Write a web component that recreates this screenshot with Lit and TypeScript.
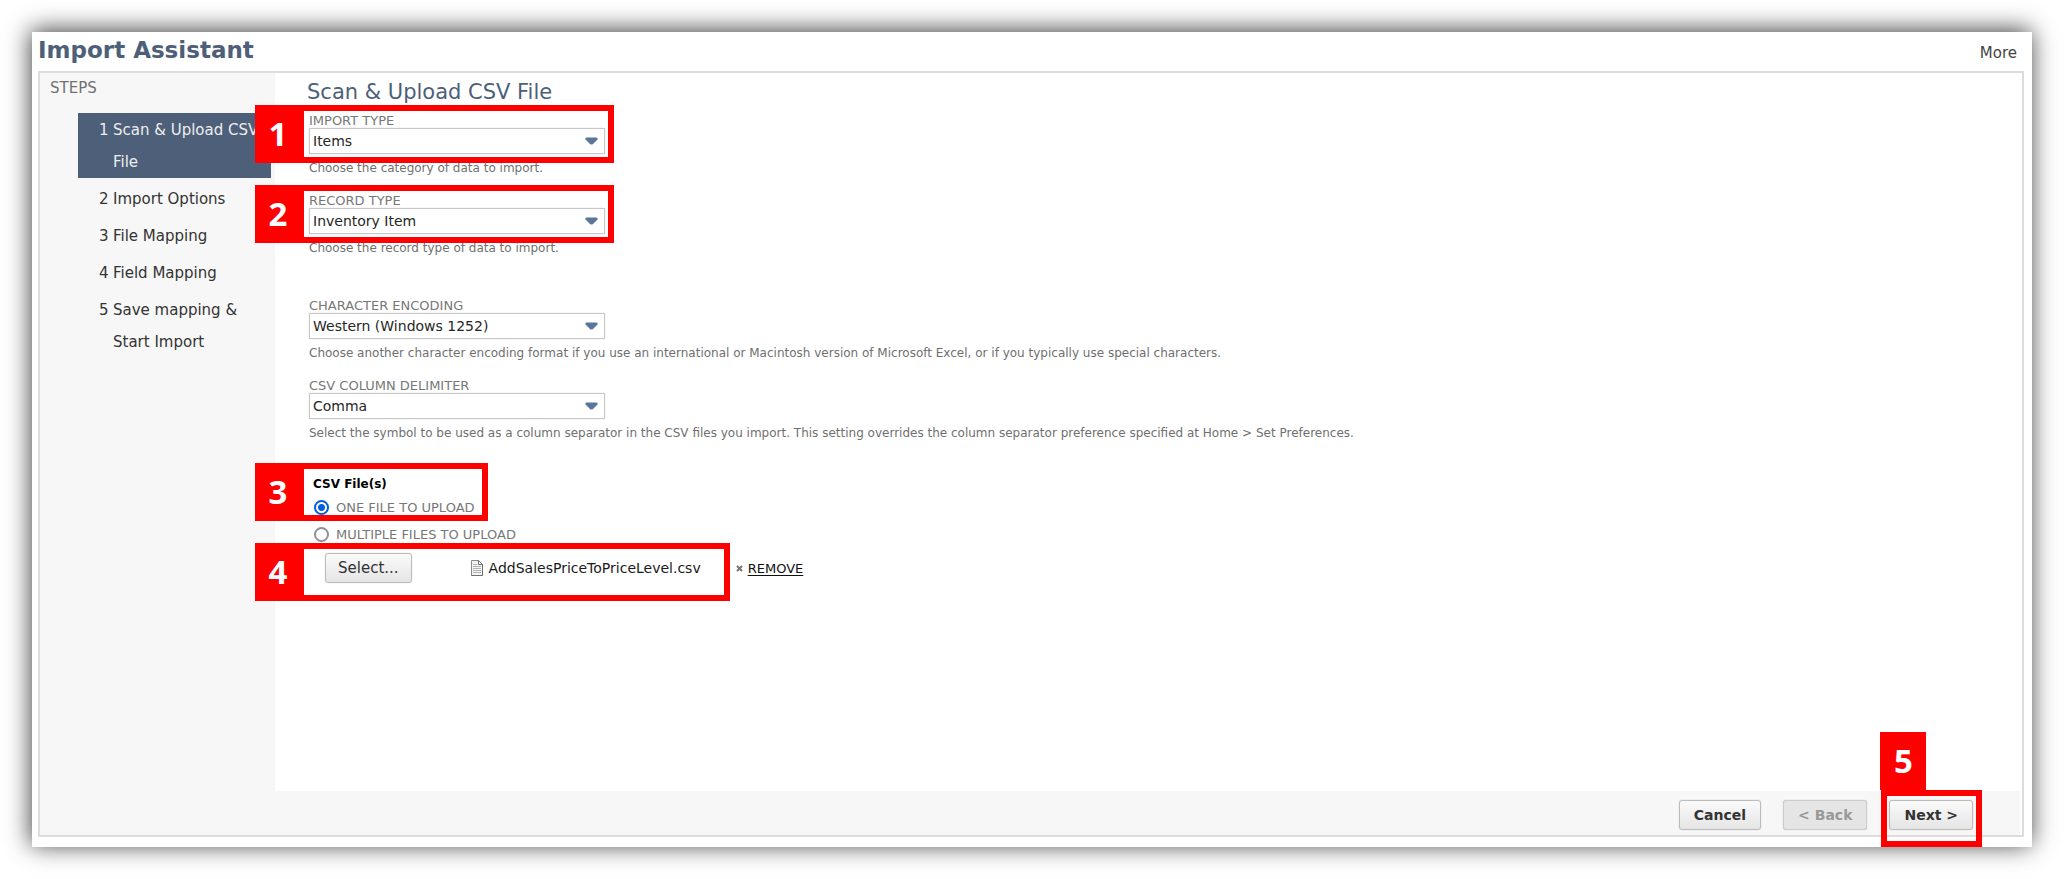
import { LitElement, html, css, svg, nothing } from 'lit';
import { customElement, property, state } from 'lit/decorators.js';
import { classMap } from 'lit/directives/class-map.js';

interface Step {
  label: string;
}

interface FieldDef {
  id: string;
  label: string;
  help: string;
  value: string;
  options: string[];
  callout?: number;
}

const STEPS: Step[] = [
  { label: 'Scan & Upload CSV File' },
  { label: 'Import Options' },
  { label: 'File Mapping' },
  { label: 'Field Mapping' },
  { label: 'Save mapping & Start Import' },
];

const TYPE_FIELDS: FieldDef[] = [
  {
    id: 'import-type',
    label: 'IMPORT TYPE',
    help: 'Choose the category of data to import.',
    value: 'Items',
    options: ['Items'],
    callout: 1,
  },
  {
    id: 'record-type',
    label: 'RECORD TYPE',
    help: 'Choose the record type of data to import.',
    value: 'Inventory Item',
    options: ['Inventory Item'],
    callout: 2,
  },
];

const FORMAT_FIELDS: FieldDef[] = [
  {
    id: 'encoding',
    label: 'CHARACTER ENCODING',
    help: 'Choose another character encoding format if you use an international or Macintosh version of Microsoft Excel, or if you typically use special characters.',
    value: 'Western (Windows 1252)',
    options: ['Western (Windows 1252)'],
  },
  {
    id: 'delimiter',
    label: 'CSV COLUMN DELIMITER',
    help: 'Select the symbol to be used as a column separator in the CSV files you import. This setting overrides the column separator preference specified at Home > Set Preferences.',
    value: 'Comma',
    options: ['Comma'],
  },
];

/* Red numbered marker: fills the box given by its host and frames what lies inside. */
@customElement('step-callout')
export class StepCallout extends LitElement {
  @property({ type: Number }) number = 1;
  @property({ type: Boolean, reflect: true }) above = false;

  static styles = css`
    :host {
      position: absolute;
      z-index: 2;
      display: flex;
      pointer-events: none;
    }
    .badge {
      display: flex;
      align-items: center;
      justify-content: center;
      flex: none;
      box-sizing: border-box;
      width: 49px;
      padding-right: 3px;
      background: #ff0000;
      color: #ffffff;
      font: 700 33px/44px 'Open Sans', 'Noto Sans', sans-serif;
    }
    .frame {
      flex: 1;
      border: 6px solid #ff0000;
      border-left-width: 0;
    }
    :host([above]) .badge {
      position: absolute;
      bottom: 100%;
      left: -1px;
      width: 46px;
      height: 58px;
      padding-right: 0;
    }
    :host([above]) .frame {
      border-left-width: 6px;
    }
  `;

  render() {
    return html`<span class="badge">${this.number}</span><span class="frame"></span>`;
  }
}

@customElement('select-field')
export class SelectField extends LitElement {
  @property({ attribute: false }) field!: FieldDef;

  static styles = css`
    :host {
      display: block;
    }
    .control {
      position: relative;
      width: 296px;
    }
    label {
      display: block;
      color: #777777;
      font-size: 13px;
      line-height: 15px;
    }
    .box {
      display: grid;
      align-items: center;
    }
    select,
    .arrow {
      grid-area: 1 / 1;
    }
    select {
      appearance: none;
      box-sizing: border-box;
      width: 100%;
      height: 26px;
      margin: 0;
      padding: 0 28px 0 3px;
      border: 1px solid #c8c8c8;
      border-radius: 0;
      box-shadow: 0 0 1px #cccccc;
      background: #ffffff;
      color: #262626;
      font: inherit;
      font-size: 14px;
    }
    .arrow {
      justify-self: end;
      margin-right: 7px;
      pointer-events: none;
    }
    .help {
      margin: 4px 0 0;
      color: #6f6f6f;
      font-size: 12px;
      line-height: 20px;
    }
    step-callout {
      inset: -8px -9px -9px -54px;
    }
  `;

  render() {
    const f = this.field;
    return html`
      <div class="control">
        <label for=${f.id}>${f.label}</label>
        <div class="box">
          <select id=${f.id}>
            ${f.options.map((o) => html`<option ?selected=${o === f.value}>${o}</option>`)}
          </select>
          <svg class="arrow" width="13" height="8" viewBox="0 0 13 8" aria-hidden="true">
            <path d="M1.500 0.500h10q1 0 1 1v1L8 7q-1.500 1-3 0L0.500 2.500v-1q0-1 1-1z" fill="#5a779b" />
          </svg>
        </div>
        ${f.callout ? html`<step-callout .number=${f.callout}></step-callout>` : nothing}
      </div>
      <p class="help">${f.help}</p>
    `;
  }
}

@customElement('app-root')
export class AppRoot extends LitElement {
  @state() private current = 0;
  @state() private mode: 'one' | 'many' = 'one';

  static styles = css`
    :host {
      display: block;
      box-sizing: border-box;
      min-height: 100vh;
      padding: 32px;
      background: #ffffff;
      color: #333333;
      font-family: 'DejaVu Sans', Verdana, sans-serif;
    }
    .window {
      display: flex;
      flex-direction: column;
      box-sizing: border-box;
      min-height: calc(100vh - 64px);
      padding: 0 8px 10px 6px;
      background: #ffffff;
      box-shadow: -1px -2px 23px rgba(0, 0, 0, 0.76);
    }
    header {
      display: flex;
      align-items: baseline;
      justify-content: space-between;
      padding: 0 7px 3px 0;
      line-height: 36px;
    }
    h1 {
      margin: 0;
      color: #4d5f79;
      font-size: 23px;
      font-weight: 700;
    }
    .more {
      color: #444444;
      font-size: 15px;
      line-height: 24px;
      text-decoration: none;
    }
    .frame {
      display: flex;
      flex: 1;
      flex-direction: column;
      border: 2px solid #dcdcdc;
      padding-right: 2px;
    }
    .body {
      display: flex;
      flex: 1;
    }
    nav {
      flex: none;
      box-sizing: border-box;
      width: 235px;
      padding: 5px 4px 0 0;
      background: #f7f7f7;
    }
    h2 {
      margin: 0 0 15px 10px;
      color: #707070;
      font-size: 15px;
      font-weight: 400;
      line-height: 20px;
    }
    ol {
      display: flex;
      flex-direction: column;
      gap: 4px;
      margin: 0 0 0 38px;
      padding: 0;
      list-style: none;
    }
    .step {
      display: grid;
      grid-template-columns: 14px 1fr;
      padding: 1px 0 0 21px;
      font-size: 15px;
      line-height: 32px;
    }
    .step.current {
      background: #4d5f79;
      color: #eeeeee;
    }
    main {
      flex: 1;
      padding: 7px 32px 32px;
    }
    h3 {
      margin: 0 0 9px;
      color: #4d5f79;
      font-size: 21px;
      font-weight: 400;
      line-height: 24px;
    }
    form {
      display: flex;
      flex-direction: column;
      align-items: flex-start;
      padding-left: 2px;
    }
    .fields {
      display: grid;
      gap: 15px;
    }
    .fields + .fields {
      margin-top: 40px;
    }
    fieldset {
      margin: 31px 0 0;
      padding: 0 0 0 4px;
      border: 0;
    }
    .marked {
      position: relative;
      width: fit-content;
    }
    .group-title {
      color: #000000;
      font-size: 12px;
      font-weight: 700;
      line-height: 20px;
    }
    .radio {
      display: flex;
      align-items: center;
      gap: 7px;
      height: 27px;
      padding-left: 1px;
      color: #777777;
      font-size: 13px;
    }
    .radio input {
      appearance: none;
      box-sizing: border-box;
      width: 15px;
      height: 15px;
      margin: 0;
      border: 2px solid #8f8f9d;
      border-radius: 50%;
      background: #ffffff;
    }
    .radio input:checked {
      border-color: #0060df;
      background: radial-gradient(circle, #0060df 3px, #ffffff 4px);
    }
    .upload {
      display: flex;
      align-items: center;
      gap: 35px;
      margin: 5px 0 0 12px;
    }
    .picked {
      display: flex;
      align-items: center;
      gap: 58px;
    }
    .file {
      display: flex;
      align-items: center;
      gap: 5px;
      color: #1a1a1a;
      font-size: 14px;
    }
    .remove {
      display: flex;
      align-items: center;
      gap: 5px;
      color: #111111;
      font-size: 13px;
      text-underline-offset: 2px;
    }
    button {
      box-sizing: border-box;
      height: 30px;
      padding: 0 14px;
      border: 1px solid #bbbbbb;
      border-radius: 3px;
      box-shadow: 0 0 1px #bbbbbb;
      background: linear-gradient(#fafafa, #e5e5e5);
      color: #333333;
      font: 700 14px 'DejaVu Sans', Verdana, sans-serif;
    }
    button:disabled {
      border-color: #cccccc;
      background: #e5e5e5;
      color: #999999;
    }
    .browse {
      padding: 0 12px;
      font-size: 15px;
      font-weight: 400;
    }
    footer {
      display: flex;
      justify-content: flex-end;
      gap: 22px;
      padding: 9px 47px 5px;
      background: #f7f7f7;
    }
    .on-choice {
      inset: -11px -13px 0 -58px;
    }
    .on-file {
      inset: -10px -29px -18px -70px;
    }
    .on-next {
      inset: -10px -9px -17px -8px;
    }
  `;

  private fileIcon() {
    return svg`<svg width="14" height="16" viewBox="0 0 14 16" aria-hidden="true">
      <path d="M1.500 0.500h7l4 4v11h-11z" fill="#f2f2f2" stroke="#8a8a8a" />
      <path d="M8.500 0.500v4h4z" fill="#ffffff" stroke="#6f6f6f" />
      <path d="M3 4.500h4M3 6.500h8M3 8.500h8M3 10.500h8M3 12.500h8" stroke="#b5b5b5" />
      <path d="M12.500 5v10.500h-11" fill="none" stroke="#6f6f6f" />
    </svg>`;
  }

  render() {
    return html`
      <div class="window">
        <header>
          <h1>Import Assistant</h1>
          <a class="more" href="#more">More</a>
        </header>
        <div class="frame">
          <div class="body">
            <nav aria-label="Steps">
              <h2>STEPS</h2>
              <ol>
                ${STEPS.map(
                  (s, i) => html`<li class=${classMap({ step: true, current: i === this.current })}>
                    <span>${i + 1}</span><span>${s.label}</span>
                  </li>`,
                )}
              </ol>
            </nav>
            <main>
              <h3>Scan &amp; Upload CSV File</h3>
              <form @submit=${(e: Event) => e.preventDefault()}>
                <div class="fields">
                  ${TYPE_FIELDS.map((f) => html`<select-field .field=${f}></select-field>`)}
                </div>
                <div class="fields">
                  ${FORMAT_FIELDS.map((f) => html`<select-field .field=${f}></select-field>`)}
                </div>
                <fieldset aria-labelledby="files-title">
                  <div class="marked">
                    <div class="group-title" id="files-title">CSV File(s)</div>
                    <label class="radio">
                      <input
                        type="radio"
                        name="mode"
                        .checked=${this.mode === 'one'}
                        @change=${() => (this.mode = 'one')}
                      />
                      ONE FILE TO UPLOAD
                    </label>
                    <step-callout class="on-choice" .number=${3}></step-callout>
                  </div>
                  <label class="radio">
                    <input
                      type="radio"
                      name="mode"
                      .checked=${this.mode === 'many'}
                      @change=${() => (this.mode = 'many')}
                    />
                    MULTIPLE FILES TO UPLOAD
                  </label>
                  <div class="upload">
                    <div class="picked marked">
                      <button class="browse" type="button">Select...</button>
                      <span class="file">${this.fileIcon()}AddSalesPriceToPriceLevel.csv</span>
                      <step-callout class="on-file" .number=${4}></step-callout>
                    </div>
                    <a class="remove" href="#remove">
                      <svg width="7" height="7" viewBox="0 0 7 7" aria-hidden="true">
                        <path d="M1 1l5 5M6 1l-5 5" stroke="#777777" stroke-width="2" />
                      </svg>
                      REMOVE
                    </a>
                  </div>
                </fieldset>
              </form>
            </main>
          </div>
          <footer>
            <button type="button">Cancel</button>
            <button type="button" disabled>&lt; Back</button>
            <div class="marked">
              <button type="button">Next &gt;</button>
              <step-callout class="on-next" above .number=${5}></step-callout>
            </div>
          </footer>
        </div>
      </div>
    `;
  }
}
